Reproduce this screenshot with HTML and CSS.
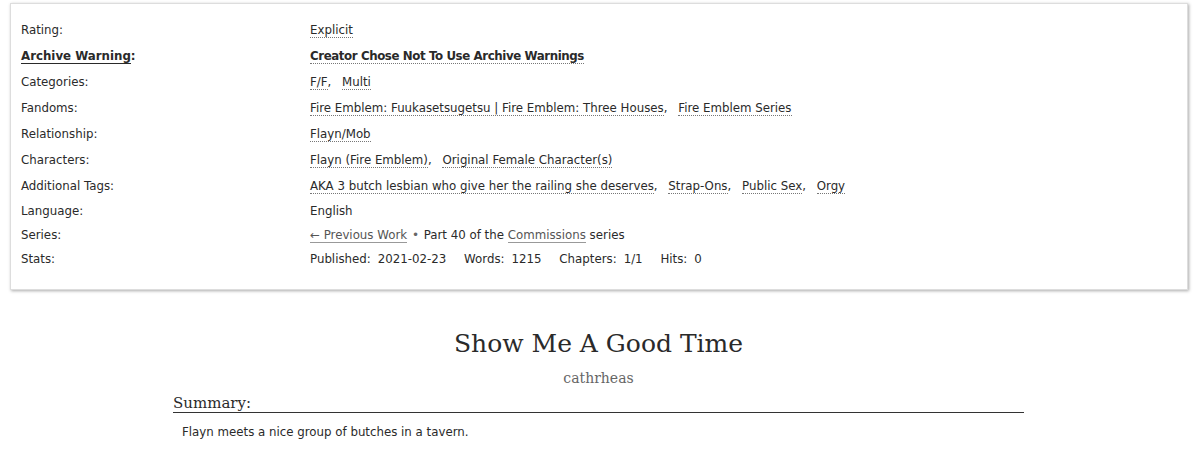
FILE: index.html
```html
<!DOCTYPE html>
<html lang="en">
  <head>
    <meta charset="UTF-8" />
    <title>Show Me A Good Time</title>
    <link rel="stylesheet" href="styles.css">
  </head>
  <body>
    <div class="wrapper">
      <dl class="work meta">
        <dt>Rating:</dt>
        <dd class="tags"><a class="tag" href="#">Explicit</a></dd>

        <dt class="warning"><span class="underline">Archive Warning</span>:</dt>
        <dd class="tags bold"><a class="tag" href="#">Creator Chose Not To Use Archive Warnings</a></dd>

        <dt>Categories:</dt>
        <dd class="tags"><a class="tag" href="#">F/F</a>, <a class="tag" href="#">Multi</a></dd>

        <dt>Fandoms:</dt>
        <dd class="tags"><a class="tag" href="#">Fire Emblem: Fuukasetsugetsu | Fire Emblem: Three Houses</a>, <a class="tag" href="#">Fire Emblem Series</a></dd>

        <dt>Relationship:</dt>
        <dd class="tags"><a class="tag" href="#">Flayn/Mob</a></dd>

        <dt>Characters:</dt>
        <dd class="tags"><a class="tag" href="#">Flayn (Fire Emblem)</a>, <a class="tag" href="#">Original Female Character(s)</a></dd>

        <dt>Additional Tags:</dt>
        <dd class="tags"><a class="tag" href="#">AKA 3 butch lesbian who give her the railing she deserves</a>, <a class="tag" href="#">Strap-Ons</a>, <a class="tag" href="#">Public Sex</a>, <a class="tag" href="#">Orgy</a></dd>

        <dt class="short">Language:</dt>
        <dd class="short">English</dd>

        <dt class="short">Series:</dt>
        <dd class="short series">
          <a class="previous" href="#">&larr; Previous Work</a>
          <span class="divider">&bull;</span>
          Part 40 of the <a href="#">Commissions</a> series
        </dd>

        <dt class="short">Stats:</dt>
        <dd class="short stats">
          <span class="label">Published:</span><span class="value">2021-02-23</span>
          <span class="label">Words:</span><span class="value">1215</span>
          <span class="label">Chapters:</span><span class="value">1/1</span>
          <span class="label">Hits:</span><span class="value">0</span>
        </dd>
      </dl>

      <div class="preface">
        <h2 class="title">Show Me A Good Time</h2>
        <h3 class="byline"><a href="#">cathrheas</a></h3>

        <div class="summary">
          <h3 class="heading">Summary:</h3>
          <p>Flayn meets a nice group of butches in a tavern.</p>
        </div>
      </div>
    </div>
  </body>
</html>
```

FILE: styles.css
```css
* {
  margin: 0;
  padding: 0;
  box-sizing: border-box;
}

body {
  background: #fff;
  color: #2a2a2a;
  font-family: "DejaVu Sans", Verdana, sans-serif;
  font-size: 11.8px;
}

.wrapper {
  padding: 3px 12px 0 10px;
}

a {
  color: #2a2a2a;
  text-decoration: none;
}

/* the meta box */
.work.meta {
  display: grid;
  grid-template-columns: 289px 1fr;
  padding: 13px 10px 18px;
  border: 1px solid #ddd;
  box-shadow: 1px 1px 3px #aaa;
}

.meta dt,
.meta dd {
  line-height: 18px;
  padding: 4px 0;
}

.meta dt.short,
.meta dd.short {
  padding: 3px 0;
}

.meta dt.warning {
  font-weight: bold;
}

.underline {
  border-bottom: 1px solid #2a2a2a;
}

.meta dd.bold {
  font-weight: bold;
  letter-spacing: -0.4px;
}

.tags a.tag {
  border-bottom: 1px dotted #777;
}

.tags a.tag + a.tag {
  margin-left: 7px;
}

.series a {
  color: #555;
  border-bottom: 1px solid #999;
}

.series .divider {
  color: #666;
  font-size: 12px;
  margin: 0 1px;
}

.stats .label {
  margin-right: 7px;
}

.stats .value {
  margin-right: 14px;
}

/* title block */
.preface {
  margin: 0 164px 0 163px;
}

.title {
  font-family: Georgia, "DejaVu Serif", serif;
  font-weight: normal;
  font-size: 25px;
  text-align: center;
  margin-top: 39px;
  line-height: 30px;
}

.byline {
  font-family: Georgia, "DejaVu Serif", serif;
  font-weight: normal;
  font-size: 14px;
  text-align: center;
  margin-top: 11px;
}

.byline a {
  color: #666;
}

.summary .heading {
  font-family: Georgia, "DejaVu Serif", serif;
  font-weight: normal;
  font-size: 15px;
  line-height: 18px;
  border-bottom: 1px solid #333;
  margin-top: 8px;
}

.summary p {
  padding: 10px 9px 7px;
  line-height: 18px;
}
```
